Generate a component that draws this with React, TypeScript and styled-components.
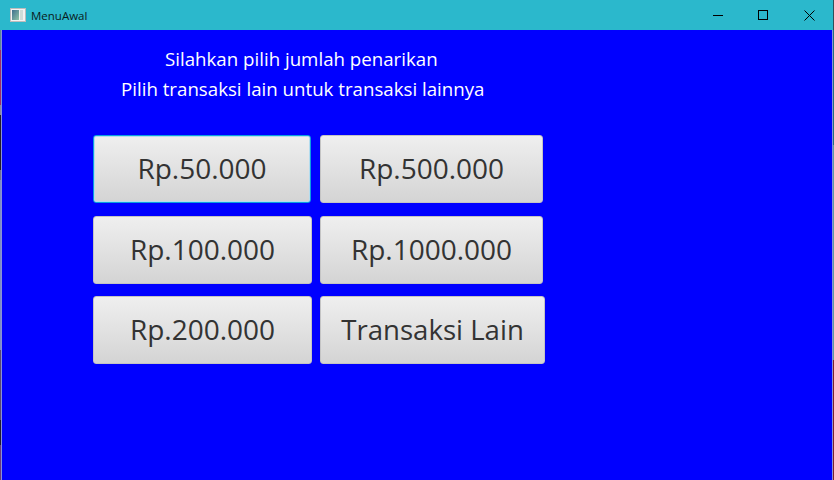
import React from "react";
import styled, { createGlobalStyle } from "styled-components";

const Global = createGlobalStyle`
  html, body { margin: 0; padding: 0; background: #0000ff; }
  #root { width: 834px; height: 480px; overflow: hidden; }
`;

const Frame = styled.div`
  width: 834px;
  height: 480px;
  display: flex;
  flex-direction: column;
  background:
    linear-gradient(to bottom,
      #5a8a94 0 50px, #a02c64 50px 105px, #8a8a9a 105px 115px, #241c28 115px 170px,
      #70708c 170px 180px, #7c8cc4 180px 350px, #5a4a70 350px 420px, #201c30 420px 445px,
      #6a3a7c 445px 480px) left top / 1px 100% no-repeat,
    linear-gradient(to bottom, #2f4f5a 0 30px, #1f6f80 30px 145px, #5a9aa4 145px 360px, #7a2030 360px 480px)
      right top / 1px 100% no-repeat,
    #8a90d8;
`;

const TitleBar = styled.header`
  height: 30px;
  flex: none;
  display: flex;
  align-items: center;
  padding: 0 1px 0 10px;
  margin-right: 1px;
  background: #2bb8cc;
`;

const AppIcon = styled.svg`
  width: 16px;
  height: 16px;
  flex: none;
  margin-right: 5px;
`;

const WindowTitle = styled.span`
  flex: 1;
  font: 11.5px "Open Sans", "Noto Sans", sans-serif;
  color: #0a1a20;
`;

const WindowButton = styled.div`
  width: 46px;
  height: 28px;
  display: flex;
  align-items: center;
  justify-content: center;
`;

const Body = styled.main`
  flex: 1;
  display: flex;
  flex-direction: column;
  background: #0000ff;
  margin-left: 2px;
  margin-right: 2px;
`;

const Message = styled.div`
  width: 600px;
  padding-top: 14px;
  font: 18.7px/30px "Open Sans", "Noto Sans", sans-serif;
  color: #ffffff;
`;

const MessageLine = styled.div<{ $left: number }>`
  padding-left: ${(p) => p.$left}px;
  white-space: nowrap;
`;

const ButtonGrid = styled.div`
  display: flex;
  flex-direction: column;
  padding: 31px 0 0 91px;
`;

const ButtonRow = styled.div<{ $gap: number; $mb: number }>`
  display: flex;
  gap: ${(p) => p.$gap}px;
  margin-bottom: ${(p) => p.$mb}px;
`;

const AmountButton = styled.button<{ $w: number; $focused?: boolean; $size?: number }>`
  width: ${(p) => p.$w}px;
  height: 68px;
  padding: 0 0 3px;
  box-sizing: border-box;
  border-radius: 3px;
  border: 1px solid ${(p) => (p.$focused ? "#0a9fe0" : "#c4c4c4")};
  box-shadow: ${(p) => (p.$focused ? "inset 0 0 0 1px #b4dcee" : "none")};
  background: linear-gradient(to bottom, #efefef, #d4d4d4);
  color: #333333;
  font: ${(p) => p.$size ?? 28}px "Open Sans", "Noto Sans", sans-serif;
  white-space: nowrap;
`;

export default function App() {
  return (
    <Frame>
      <Global />
      <TitleBar>
        <AppIcon viewBox="0 0 16 16">
          <defs>
            <linearGradient id="icon-pane" x1="0" y1="0" x2="1" y2="1">
              <stop offset="0" stopColor="#3f6f8f" />
              <stop offset="1" stopColor="#8fc4a8" />
            </linearGradient>
          </defs>
          <rect x="0.5" y="1.5" width="15" height="13" fill="#f2f2f2" stroke="#bcbcbc" />
          <rect x="2" y="3" width="7" height="10" fill="url(#icon-pane)" />
          <rect x="10" y="3" width="3" height="10" fill="#cfdcd8" />
        </AppIcon>
        <WindowTitle>MenuAwal</WindowTitle>
        <WindowButton>
          <svg width="12" height="10" viewBox="0 0 12 10">
            <path d="M2 5.5H12" stroke="#000" strokeWidth="1" />
          </svg>
        </WindowButton>
        <WindowButton>
          <svg width="10" height="10" viewBox="0 0 10 10">
            <rect x="0.5" y="0.5" width="9" height="9" fill="none" stroke="#000" strokeWidth="1" />
          </svg>
        </WindowButton>
        <WindowButton>
          <svg width="11" height="11" viewBox="0 0 11 11">
            <path d="M0.5 0.5L10.5 10.5M10.5 0.5L0.5 10.5" stroke="#000" strokeWidth="1" />
          </svg>
        </WindowButton>
      </TitleBar>
      <Body>
        <Message>
          <MessageLine $left={163}>Silahkan pilih jumlah penarikan</MessageLine>
          <MessageLine $left={119}>Pilih transaksi lain untuk transaksi lainnya</MessageLine>
        </Message>
        <ButtonGrid>
          <ButtonRow $gap={9} $mb={13}>
            <AmountButton $w={218} $focused>Rp.50.000</AmountButton>
            <AmountButton $w={223}>Rp.500.000</AmountButton>
          </ButtonRow>
          <ButtonRow $gap={8} $mb={12}>
            <AmountButton $w={219}>Rp.100.000</AmountButton>
            <AmountButton $w={223}>Rp.1000.000</AmountButton>
          </ButtonRow>
          <ButtonRow $gap={8} $mb={0}>
            <AmountButton $w={219}>Rp.200.000</AmountButton>
            <AmountButton $w={225} $size={27.6}>Transaksi Lain</AmountButton>
          </ButtonRow>
        </ButtonGrid>
      </Body>
    </Frame>
  );
}
